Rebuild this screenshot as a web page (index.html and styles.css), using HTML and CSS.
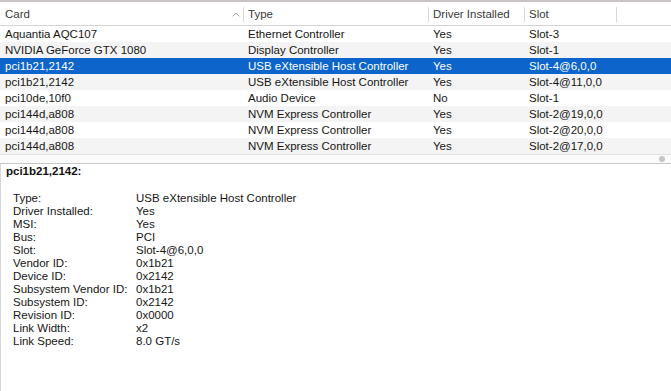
FILE: index.html
```html
<!DOCTYPE html>
<html>
<head>
<meta charset="utf-8">
<link rel="stylesheet" href="styles.css">
</head>
<body>
<div class="window">
  <div class="table">
    <div class="row header">
      <div class="cell">Card<span class="sort"><svg width="8" height="5" viewBox="0 0 8 5"><path d="M0.8 4.3 L4 1 L7.2 4.3" fill="none" stroke="#9a9a9a" stroke-width="1"/></svg></span></div>
      <div class="cell sep">Type</div>
      <div class="cell sep">Driver Installed</div>
      <div class="cell sep">Slot</div>
      <div class="cell sep"></div>
    </div>
    <div class="row"><div class="cell">Aquantia AQC107</div><div class="cell">Ethernet Controller</div><div class="cell">Yes</div><div class="cell">Slot-3</div><div class="cell"></div></div>
    <div class="row alt"><div class="cell">NVIDIA GeForce GTX 1080</div><div class="cell">Display Controller</div><div class="cell">Yes</div><div class="cell">Slot-1</div><div class="cell"></div></div>
    <div class="row selected"><div class="cell">pci1b21,2142</div><div class="cell">USB eXtensible Host Controller</div><div class="cell">Yes</div><div class="cell">Slot-4@6,0,0</div><div class="cell"></div></div>
    <div class="row alt"><div class="cell">pci1b21,2142</div><div class="cell">USB eXtensible Host Controller</div><div class="cell">Yes</div><div class="cell">Slot-4@11,0,0</div><div class="cell"></div></div>
    <div class="row"><div class="cell">pci10de,10f0</div><div class="cell">Audio Device</div><div class="cell">No</div><div class="cell">Slot-1</div><div class="cell"></div></div>
    <div class="row alt"><div class="cell">pci144d,a808</div><div class="cell">NVM Express Controller</div><div class="cell">Yes</div><div class="cell">Slot-2@19,0,0</div><div class="cell"></div></div>
    <div class="row"><div class="cell">pci144d,a808</div><div class="cell">NVM Express Controller</div><div class="cell">Yes</div><div class="cell">Slot-2@20,0,0</div><div class="cell"></div></div>
    <div class="row alt"><div class="cell">pci144d,a808</div><div class="cell">NVM Express Controller</div><div class="cell">Yes</div><div class="cell">Slot-2@17,0,0</div><div class="cell"></div></div>
    <div class="scrollbar"><span class="knob"></span></div>
  </div>
  <div class="detail">
    <div class="title">pci1b21,2142:</div>
    <dl class="props">
      <dt>Type:</dt><dd>USB eXtensible Host Controller</dd>
      <dt>Driver Installed:</dt><dd>Yes</dd>
      <dt>MSI:</dt><dd>Yes</dd>
      <dt>Bus:</dt><dd>PCI</dd>
      <dt>Slot:</dt><dd>Slot-4@6,0,0</dd>
      <dt>Vendor ID:</dt><dd>0x1b21</dd>
      <dt>Device ID:</dt><dd>0x2142</dd>
      <dt>Subsystem Vendor ID:</dt><dd>0x1b21</dd>
      <dt>Subsystem ID:</dt><dd>0x2142</dd>
      <dt>Revision ID:</dt><dd>0x0000</dd>
      <dt>Link Width:</dt><dd>x2</dd>
      <dt>Link Speed:</dt><dd>8.0 GT/s</dd>
    </dl>
  </div>
</div>
</body>
</html>
```

FILE: styles.css
```css
html, body {
  margin: 0;
  padding: 0;
  background: #ffffff;
}
body {
  font-family: "Liberation Sans", Arial, sans-serif;
  font-size: 11.5px;
  color: #161616;
  width: 671px;
  height: 391px;
  overflow: hidden;
}
.window {
  display: flex;
  flex-direction: column;
  height: 391px;
}
.table {
  border-top: 2px solid #c9c3c3;
}
.row {
  display: grid;
  grid-template-columns: 243px 185px 96px 92px 1fr;
  height: 16px;
  line-height: 16px;
}
.row .cell {
  padding-left: 5px;
  white-space: nowrap;
  overflow: hidden;
}
.row.alt {
  background: #f4f4f4;
}
.row.selected {
  background: #0d65cb;
  color: #ffffff;
}
.row.header {
  height: 21px;
  line-height: 21px;
  padding-top: 2px;
  border-bottom: 1px solid #d4d4d4;
  color: #3a3a3a;
  background: #ffffff;
}
.row.header .cell {
  position: relative;
}
.row.header .cell.sep::before {
  content: "";
  position: absolute;
  left: 0;
  top: 3px;
  bottom: 3px;
  width: 1px;
  background: #d8d8d8;
}
.sort {
  position: absolute;
  right: 3px;
  top: 0;
  display: flex;
  align-items: center;
  height: 21px;
}
.scrollbar {
  height: 8px;
  border-top: 1px solid #e2e2e2;
  border-bottom: 1px solid #c8c8c8;
  background: #fbfbfb;
  display: flex;
  justify-content: flex-end;
  align-items: center;
  padding-right: 6px;
}
.knob {
  width: 6px;
  height: 6px;
  border-radius: 50%;
  background: #c6c6c6;
}
.detail {
  flex: 1;
  border-left: 1px solid #d6d6d6;
  padding: 1px 0 0 5px;
}
.title {
  font-weight: bold;
  line-height: 13px;
  color: #111111;
}
.props {
  display: grid;
  grid-template-columns: 123px 1fr;
  margin: 14px 0 0 7px;
  line-height: 13px;
}
.props dt, .props dd {
  margin: 0;
  white-space: nowrap;
}
```
